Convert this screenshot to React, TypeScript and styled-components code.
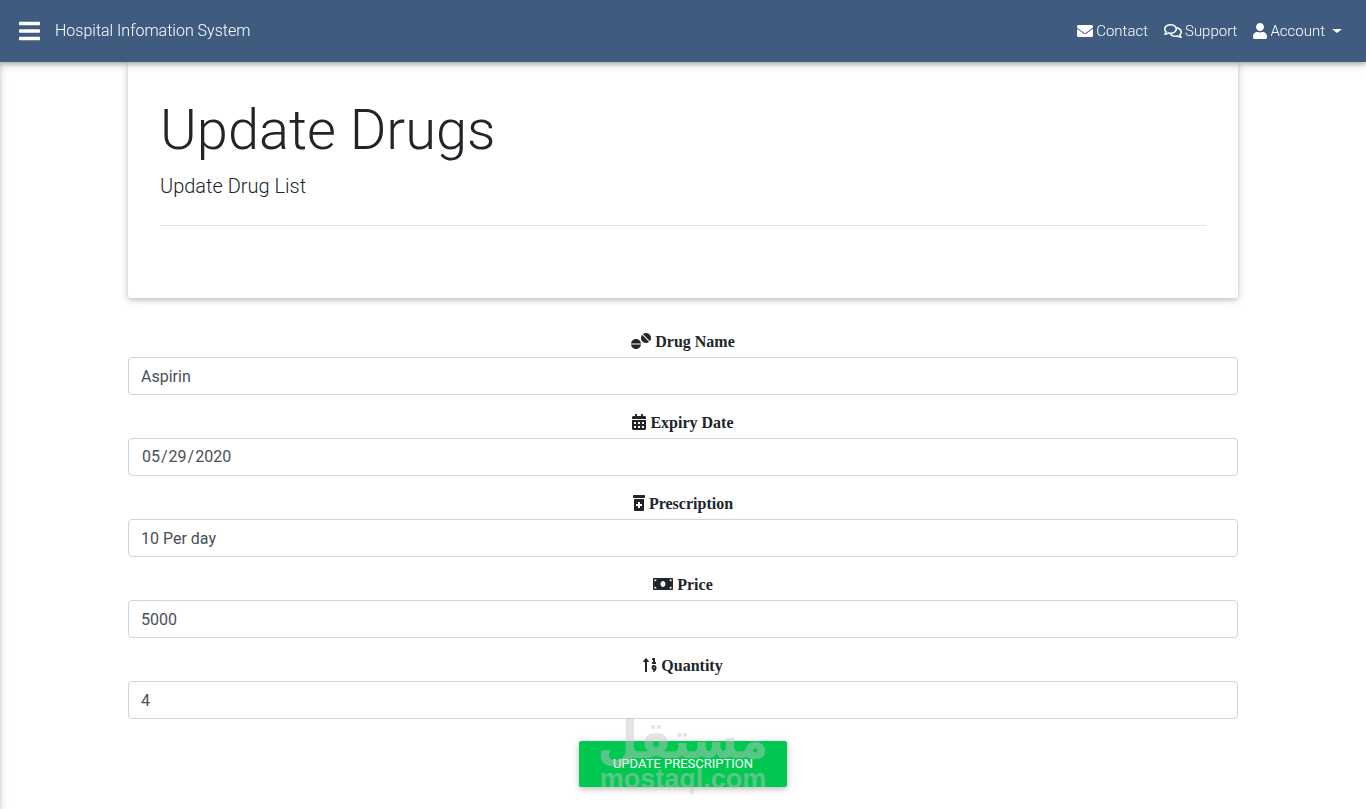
import React from "react";
import styled, { createGlobalStyle, css } from "styled-components";
import type { IconType } from "react-icons";
import {
  FaBars,
  FaCalendarAlt,
  FaEnvelope,
  FaMoneyBill,
  FaPrescriptionBottleAlt,
  FaRegComments,
  FaSortNumericUp,
  FaTablets,
  FaUser,
} from "react-icons/fa";

const raised = css`
  box-shadow: 0 2px 5px 0 rgba(0, 0, 0, 0.16), 0 2px 10px 0 rgba(0, 0, 0, 0.12);
`;

const GlobalStyle = createGlobalStyle`
  *, *::before, *::after { box-sizing: border-box; }
  body {
    margin: 0;
    background: #fff;
    color: #212529;
    font: 400 16px/24px Roboto, sans-serif;
    overflow-x: hidden;
  }
`;

const Glyph = styled.span<{ $width: number; $height?: number }>`
  display: flex;

  svg {
    width: ${({ $width }) => $width}px;
    height: ${({ $height = 16 }) => $height}px;
  }
`;

const NavBar = styled.header`
  position: sticky;
  top: 0;
  z-index: 2;
  display: flex;
  align-items: center;
  height: 62px;
  padding: 0 24px 0 19px;
  background: #3f5c80;
  color: #fff;
  font-weight: 300;
  box-shadow: 0 2px 5px 0 rgba(0, 0, 0, 0.26), 0 2px 10px 0 rgba(0, 0, 0, 0.16);
`;

const MenuButton = styled.button`
  display: flex;
  padding: 0;
  border: 0;
  background: none;
  color: inherit;
  cursor: pointer;
`;

const Brand = styled.span`
  margin-left: 15px;
`;

const NavLinks = styled.nav`
  display: flex;
  gap: 16px;
  margin-left: auto;
`;

const NavLink = styled.a`
  display: flex;
  align-items: center;
  gap: 3px;
  color: inherit;
  font-size: 15px;
  text-decoration: none;
`;

const Caret = styled.span`
  margin-left: 4px;
  border: 5px solid transparent;
  border-top: 4px solid currentColor;
  border-bottom: 0;
`;

const SideDrawer = styled.aside`
  position: fixed;
  top: 0;
  bottom: 0;
  left: -240px;
  width: 240px;
  background: #fff;
  ${raised}
`;

const Container = styled.main`
  max-width: 1140px;
  margin: 0 auto;
  padding: 0 15px 22px;
`;

const Banner = styled.section`
  padding: 35px 32px 72px;
  border-radius: 0 0 3px 3px;
  background: #fff;
  ${raised}
`;

const Title = styled.h1`
  margin: 0 0 7px;
  font-size: 56px;
  font-weight: 300;
  line-height: 67px;
`;

const Lead = styled.p`
  margin: 0;
  padding-bottom: 24px;
  border-bottom: 1px solid #e5e5e5;
  font-size: 20px;
  font-weight: 300;
  line-height: 30px;
`;

const Form = styled.form`
  display: flex;
  flex-direction: column;
  gap: 16px;
  margin-top: 32px;
`;

const Field = styled.div`
  display: flex;
  flex-direction: column;
  gap: 3px;
`;

const Label = styled.label`
  display: flex;
  align-items: center;
  justify-content: center;
  gap: 4px;
  font-family: "Liberation Serif", serif;
  font-weight: 700;

  ${Glyph} {
    margin-bottom: 2px;
  }
`;

const Input = styled.input`
  width: 100%;
  height: 38px;
  padding: 6px 12px;
  border: 1px solid #ced4da;
  border-radius: 4px;
  background: #fff;
  color: #495057;
  font: inherit;

  &::-webkit-calendar-picker-indicator {
    display: none;
  }
`;

const Actions = styled.div`
  position: relative;
  display: flex;
  justify-content: center;
  margin-top: 6px;
`;

const SubmitButton = styled.button`
  height: 46px;
  padding: 0 34px;
  border: 0;
  border-radius: 2px;
  background: #00c851;
  color: #fff;
  font: 400 13px/20px Roboto, sans-serif;
  text-transform: uppercase;
  cursor: pointer;
  ${raised}
`;

const Watermark = styled.div`
  position: absolute;
  bottom: -6px;
  left: 0;
  right: 0;
  display: flex;
  flex-direction: column;
  align-items: center;
  color: #c4c4c4;
  opacity: 0.45;
  font: 700 27px/28px "Liberation Sans", sans-serif;
  pointer-events: none;
`;

const WatermarkName = styled.span`
  font: 700 52px/50px "DejaVu Sans Condensed", "DejaVu Sans", sans-serif;
`;

type FieldSpec = {
  id: string;
  label: string;
  value: string;
  icon: IconType;
  iconWidth: number;
  type?: string;
};

const fields: FieldSpec[] = [
  { id: "name", label: "Drug Name", value: "Aspirin", icon: FaTablets, iconWidth: 20 },
  { id: "expiry", label: "Expiry Date", value: "2020-05-29", icon: FaCalendarAlt, iconWidth: 14, type: "date" },
  { id: "prescription", label: "Prescription", value: "10 Per day", icon: FaPrescriptionBottleAlt, iconWidth: 12 },
  { id: "price", label: "Price", value: "5000", icon: FaMoneyBill, iconWidth: 20 },
  { id: "quantity", label: "Quantity", value: "4", icon: FaSortNumericUp, iconWidth: 14 },
];

export default function App() {
  return (
    <>
      <GlobalStyle />
      <NavBar>
        <MenuButton type="button" aria-label="Open menu">
          <Glyph $width={21} $height={24}><FaBars /></Glyph>
        </MenuButton>
        <Brand>Hospital Infomation System</Brand>
        <NavLinks>
          <NavLink href="#contact">
            <Glyph $width={16}><FaEnvelope /></Glyph>
            Contact
          </NavLink>
          <NavLink href="#support">
            <Glyph $width={18}><FaRegComments /></Glyph>
            Support
          </NavLink>
          <NavLink href="#account">
            <Glyph $width={14}><FaUser /></Glyph>
            Account
            <Caret />
          </NavLink>
        </NavLinks>
      </NavBar>
      <SideDrawer />
      <Container>
        <Banner>
          <Title>Update Drugs</Title>
          <Lead>Update Drug List</Lead>
        </Banner>
        <Form onSubmit={(event) => event.preventDefault()}>
          {fields.map(({ id, label, value, icon: Icon, iconWidth, type = "text" }) => (
            <Field key={id}>
              <Label htmlFor={id}>
                <Glyph $width={iconWidth}><Icon /></Glyph>
                {label}
              </Label>
              <Input id={id} type={type} defaultValue={value} />
            </Field>
          ))}
          <Actions>
            <SubmitButton type="submit">Update Prescription</SubmitButton>
            <Watermark aria-hidden="true">
              <WatermarkName lang="ar">مستقل</WatermarkName>
              <span>mostaql.com</span>
            </Watermark>
          </Actions>
        </Form>
      </Container>
    </>
  );
}
